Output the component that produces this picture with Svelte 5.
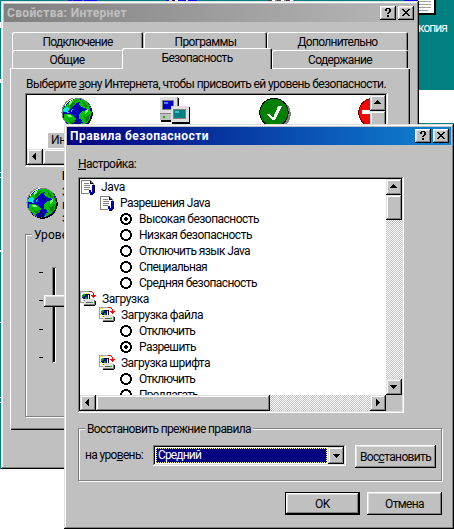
<script>
  // Spreads the glyphs so that a label takes the given number of pixels.
  function fit(node, width) {
    const natural = node.getBoundingClientRect().width;
    const count = [...node.textContent].length;
    node.style.letterSpacing = `${(width - natural) / count}px`;
  }

  const rules = [
    { kind: 'java', level: 0, text: 'Java', w: 24 },
    { kind: 'java', level: 1, text: 'Разрешения Java', w: 90 },
    { kind: 'radio', on: true, text: 'Высокая безопасность', w: 120 },
    { kind: 'radio', text: 'Низкая безопасность', w: 113 },
    { kind: 'radio', text: 'Отключить язык Java', w: 111 },
    { kind: 'radio', text: 'Специальная', w: 68 },
    { kind: 'radio', text: 'Средняя безопасность', w: 118 },
    { kind: 'load', level: 0, text: 'Загрузка', w: 47 },
    { kind: 'load', level: 1, text: 'Загрузка файла', w: 82 },
    { kind: 'radio', text: 'Отключить', w: 56 },
    { kind: 'radio', on: true, text: 'Разрешить', w: 57 },
    { kind: 'load', level: 1, text: 'Загрузка шрифта', w: 89 },
    { kind: 'radio', text: 'Отключить', w: 56 },
    { kind: 'radio', text: 'Предлагать', w: 59 }
  ];
</script>

{#snippet globe()}
  <svg class="px" width="32" height="32" viewBox="0 0 32 32">
    <circle cx="16.5" cy="16.5" r="15.2" fill="#000" />
    <circle cx="15.5" cy="15.5" r="15" fill="#808080" />
    <circle cx="16" cy="16" r="14.3" fill="#0000c8" />
    <path fill="#00c000" d="M6 7l3-3 5-2h5v3l-4 1-2 3-2 1-3 4-3 1H2l1-4z M20 2l5 2 3 4 1 5h-3l-2-2-4-1-2-3z M3 17h6l4 2 2 3-1 3-3 1-1 3-4-3-3-4z M18 18l3-4 5-1 3-2 1 6-1 5-4 5-3-1-1-3-3-1z M20 26h4l-2 3-4 1z" />
    <path fill="#008000" d="M9 9l3-4 4-2 -4 6 -4 4z M6 21l4 3 4-1 -2 3 -2 1z M21 19l5 1 3-4 -1 6 -3 3 -1 -3z M21 4l4 3 2 4-4-2z" />
    <path fill="#80ff80" d="M8 5l4-2 -1 2 -3 3z M24 14l3-2 0 3 -3 2z M5 18l4 0 2 2 -4 0z" />
    <path fill="#00e8e8" d="M2 12l4-2 2 2 -2 2 2 2 -5-1z M9 14l3-2 -1 3z" />
    <path fill="none" stroke="#fff" d="M3.5 9.5Q7 3 14 1.5" />
    <path fill="#000080" d="M14 24l4 1 1 3-4 2-3-1z M17 10l3 2-2 2-2-1z" />
  </svg>
{/snippet}

{#snippet network()}
  <svg class="px" width="32" height="32" viewBox="0 0 32 32">
    <path fill="#000" d="M1 1h18v17h-1v7H1z" />
    <path fill="#808080" d="M0 0h18v18H0z" />
    <path fill="#dfdfdf" d="M0 0h17v16H0z" /><path fill="#808080" d="M2 3h12v10H2z" />
    <path fill="#0000c8" d="M3 4h10v8H3z" /><path fill="#4080ff" d="M4 5h4v2H4z" />
    <path fill="#c0c0c0" d="M0 17h15v6H0z" /><path fill="#00c000" d="M3 19h2v2H3z" />
    <path fill="#000" d="M12 10h18v17H12z M12 28h20v4H12z" />
    <path fill="#dfdfdf" d="M11 9h18v16H11z" /><path fill="#808080" d="M13 12h13v10H13z" />
    <path fill="#008080" d="M14 13h11v8H14z" /><path fill="#40c0c0" d="M15 14h4v2h-4z" />
    <path fill="#c0c0c0" d="M11 27h19v5H11z" />
  </svg>
{/snippet}

{#snippet trusted()}
  <svg class="px" width="32" height="32" viewBox="0 0 32 32">
    <circle cx="17" cy="17" r="14.7" fill="#808080" /><circle cx="15" cy="15.5" r="14.7" fill="#000" />
    <circle cx="15" cy="15.5" r="13.7" fill="#008000" />
    <path d="M8 17h3l3 4 5-12h4l-7 14h-3z" fill="#fff" />
  </svg>
{/snippet}

{#snippet restricted()}
  <svg class="px" width="32" height="32" viewBox="0 0 32 32">
    <circle cx="15" cy="15.5" r="14.7" fill="#800000" /><circle cx="15" cy="15.5" r="13.7" fill="#f00" />
    <path d="M4 13h22v4H4z" fill="#fff" />
  </svg>
{/snippet}

{#snippet arrow(dir)}
  <svg class="px" width="7" height="7" viewBox="0 0 7 7">
    {#if dir === 'up'}<path d="M3 1h1v1h1v1h1v1h1v1H0V4h1V3h1V2h1z" />
    {:else if dir === 'down'}<path d="M0 2h7v1H6v1H5v1H4v1H3V5H2V4H1V3H0z" />
    {:else if dir === 'left'}<path d="M5 0v7H4V6H3V5H2V4H1V3h1V2h1V1h1V0z" />
    {:else}<path d="M2 0v7h1V6h1V5h1V4h1V3H5V2H4V1H3V0z" />{/if}
  </svg>
{/snippet}

{#snippet caption()}
  <span class="btn3d cap">
    <svg class="px" width="12" height="10" viewBox="0 0 12 10"><path d="M3 1h1V0h4v1h1v3H8v1H7v1H5V5h1V4h1V1H5v2H3z M5 7h2v2H5z" /></svg>
  </span>
  <span class="btn3d cap">
    <svg class="px" width="12" height="10" viewBox="0 0 12 10"><path d="M2 1h2v1h1v1h2V2h1V1h2v1H9v1H8v1H7v1h1v1h1v1h1v1H8V7H7V6H5v1H4v1H2V7h1V6h1V5h1V4H4V3H3V2H2z" /></svg>
  </span>
{/snippet}

{#snippet javaIcon()}
  <svg class="px" width="16" height="16" viewBox="0 0 16 16">
    <path fill="#fff" d="M1 1h9l2 3v9H1z" />
    <path fill="#808080" d="M0 1h9v1H1v12H0z M0 14h8v1H0z M3 4h5v1H3z M3 6h6v1H3z M3 8h6v1H3z M3 10h5v1H3z M9 1h1v1h1v1h1v1h1v2h-1V5H9z" />
    <path fill="#000" d="M9 2h1v2h2v1H9z M13 6h1v8h-1v1h-1v1H9v-1h3z" />
    <path fill="#0000c0" d="M11 6h2v8h-1v1H9v-1H8v-3h2v2h1z" />
  </svg>
{/snippet}

{#snippet loadIcon()}
  <svg class="px" width="16" height="16" viewBox="0 0 16 16">
    <path fill="#a0a0a0" d="M0 0h9v12H0z" /><path fill="#fff" d="M1 1h8v10H1z" />
    <path fill="#e8e800" d="M1 1h1v1H1z M3 1h1v1H3z M1 7h1v1H1z M3 9h1v1H3z M2 5h1v1H2z M6 2h1v1H6z" />
    <path fill="#0000a0" d="M3 3h4v1h1v4H3V7H2V4h1z" /><path fill="#00a000" d="M3 3h2v2H4v1H2V4h1z M5 6h2v2H5z" />
    <path fill="#000" d="M7 3h3v5H9V4H7z" />
    <path fill="#f00" d="M9 0h3v1h1v1h1v2h2v1h-1v1h-1v1h-1V6h-1V5h-1V4h2V2h-1V1H9z" />
    <path fill="#000" d="M5 10h11v4h-1v1H4v-1z" />
    <path fill="#808080" d="M4 9h11v5H4z" /><path fill="#dfdfdf" d="M5 8h9v2H5z M4 10h10v3H4z" />
    <path fill="#606060" d="M6 11h5v1H6z" /><path fill="#00c000" d="M11 11h2v1h-2z" />
  </svg>
{/snippet}

{#snippet radio(on)}
  <svg class="px" width="12" height="12" viewBox="0 0 12 12">
    <path d="M4 0h4v1h2v1h1v2h1v4h-1v2h-1v1H8v1H4v-1H2v-1H1V8H0V4h1V2h1V1h2z" />
    <path fill="#fff" d="M4 2h4v1h1v1h1v4H9v1H8v1H4V9H3V8H2V4h1V3h1z" />
    {#if on}<path d="M5 4h2v1h1v2H7v1H5V7H4V5h1z" />{/if}
  </svg>
{/snippet}

<div class="desktop">
  <div class="edge"></div>
  <div class="paper"></div>
  <div class="doc">
    <svg class="px" width="18" height="15" viewBox="0 0 18 15"><path fill="#000" d="M0 0h18v15H0z" /><path fill="#fff" d="M0 0h16v13H0z" /><path fill="#a0a0a0" d="M0 1h13v1H0z M0 4h13v1H0z M0 7h13v1H0z M0 10h10v1H0z" /></svg>
    <span class="doc-name"><span class="t" use:fit={29}>копия</span></span>
  </div>

  <section class="window props">
    <header class="title inactive">
      <b class="t" use:fit={120}>Свойства: Интернет</b><span class="grow"></span>{@render caption()}
    </header>
    <div class="sheet">
      <div class="tabs">
        <div class="tab a"><span class="t" use:fit={70}>Подключение</span></div>
        <div class="tab b"><span class="t" use:fit={62}>Программы</span></div>
        <div class="tab c"><span class="t" use:fit={80}>Дополнительно</span></div>
      </div>
      <div class="tabs front">
        <div class="tab d"><span class="t" use:fit={35}>Общие</span></div>
        <div class="tab sel"><span class="t" use:fit={71}>Безопасность</span></div>
        <div class="tab e"><span class="t" use:fit={64}>Содержание</span></div>
      </div>
      <div class="panel">
        <div class="line"><span class="t" use:fit={360}>Выберите <u>з</u>ону Интернета, чтобы присвоить ей уровень безопасности.</span></div>
        <div class="sunken zones">
          <div class="zone-row">
            <div class="zone-items">
              <div class="zone">{@render globe()}<span class="zone-name"><span class="t" use:fit={51}>Интернет</span></span></div>
              <div class="zone">{@render network()}</div>
              <div class="zone">{@render trusted()}</div>
              <div class="zone">{@render restricted()}</div>
            </div>
            <div class="vbar"><span class="btn3d sb">{@render arrow('up')}</span><span class="btn3d thumb"></span></div>
          </div>
          <div class="hbar"><span class="btn3d sb">{@render arrow('left')}</span><span class="btn3d thumb"></span></div>
        </div>
        <div class="zone-info">
          {@render globe()}
          <div class="info-text"><b>Интернет</b><span>Зона</span><span>которая</span><span>зоны</span></div>
        </div>
        <div class="group level">
          <span class="legend"><span class="t" use:fit={48}>Уровень</span></span>
          <div class="slider">
            <div class="ticks"><i></i><i></i><i></i><i></i></div>
            <div class="track"><span class="btn3d knob"></span></div>
          </div>
        </div>
      </div>
    </div>
  </section>

  <section class="window dialog">
    <header class="title">
      <b class="t" use:fit={139}>Правила безопасности</b><span class="grow"></span>{@render caption()}
    </header>
    <div class="body">
      <div class="line"><span class="t" use:fit={58}><u>Н</u>астройка:</span></div>
      <div class="sunken list">
        <div class="list-row">
          <div class="rules">
            {#each rules as r}
              <div class="rule {r.kind}" class:nested={r.level === 1}>
                {#if r.kind === 'radio'}{@render radio(r.on)}
                {:else if r.kind === 'java'}{@render javaIcon()}
                {:else}{@render loadIcon()}{/if}
                <span class="t" use:fit={r.w}>{r.text}</span>
              </div>
            {/each}
          </div>
          <div class="vbar">
            <span class="btn3d sb">{@render arrow('up')}</span><span class="btn3d thumb"></span>
            <span class="grow"></span><span class="btn3d sb">{@render arrow('down')}</span>
          </div>
        </div>
        <div class="hbar">
          <span class="btn3d sb">{@render arrow('left')}</span><span class="btn3d thumb"></span>
          <span class="grow"></span><span class="btn3d sb">{@render arrow('right')}</span><span class="corner"></span>
        </div>
      </div>
      <div class="group reset">
        <span class="legend"><span class="t" use:fit={164}>Восстановить прежние правила</span></span>
        <div class="reset-row">
          <span class="reset-label"><span class="t" use:fit={58}>на уро<u>в</u>ень:</span></span>
          <div class="sunken combo">
            <span class="value"><span class="t" use:fit={43}>Средний</span></span>
            <span class="btn3d drop">{@render arrow('down')}</span>
          </div>
          <button class="btn3d restore"><span class="t" use:fit={71}>Вос<u>с</u>тановить</span></button>
        </div>
      </div>
      <div class="actions">
        <button class="btn3d ok"><span class="t" use:fit={15}>OK</span></button>
        <button class="btn3d"><span class="t" use:fit={39}>Отмена</span></button>
      </div>
    </div>
  </section>
</div>

<style>
  .desktop {
    position: relative; width: 454px; height: 529px; overflow: hidden; background: #fff;
    font: 12px/14px Roboto, "Liberation Sans", Arial, sans-serif; color: #000;
  }
  .desktop * { box-sizing: border-box; }
  .px { display: block; shape-rendering: crispEdges; flex: none; }
  .t { display: inline-block; white-space: pre; flex: none; }
  u { text-decoration: underline; text-underline-offset: 1px; text-decoration-thickness: 1px; text-decoration-skip-ink: none; }
  .grow { flex: 1; }

  .edge {
    position: absolute; left: 0; top: 0; width: 454px; height: 469px;
    background:
      linear-gradient(90deg, #00f 0 4px, #008080 0 5px, #00f 0 14px, #008080 0 16px, #00f 0) 68px 0 / 29px 1px no-repeat,
      linear-gradient(90deg, #00f 0 3px, #e8e0a0 0 6px, #000080 0 9px, #fff 0 12px, #00f 0 20px, #e8e0a0 0 22px, #00f 0) 166px 0 / 31px 1px no-repeat,
      repeating-linear-gradient(90deg, #404040 0 4px, #fff 0 7px, #808080 0 9px) 268px 0 / 26px 1px no-repeat,
      linear-gradient(#00f, #00f) 404px 0 / 15px 1px no-repeat,
      linear-gradient(#fff, #fff) 0 22px / 1px 6px no-repeat,
      linear-gradient(#fff, #fff) 0 79px / 1px 4px no-repeat,
      linear-gradient(#fff, #fff) 0 172px / 1px 1px no-repeat,
      linear-gradient(#fff, #fff) 0 177px / 1px 1px no-repeat,
      linear-gradient(#fff, #fff) 0 250px / 1px 2px no-repeat,
      linear-gradient(#fff, #fff) 0 322px / 1px 1px no-repeat,
      linear-gradient(#fff, #fff) 0 397px / 1px 1px no-repeat,
      linear-gradient(#fff, #fff) 0 402px / 1px 1px no-repeat,
      #008080;
  }
  .paper { position: absolute; left: 419px; top: 90px; width: 35px; height: 33px; background: #fff; }
  .doc { position: absolute; left: 418px; top: 0; color: #fff; }
  .doc-name { display: block; margin-top: 6px; }

  .window {
    position: absolute; padding: 3px; background: #c0c0c0;
    box-shadow: inset -1px -1px #000, inset 1px 1px #dfdfdf, inset -2px -2px #808080, inset 2px 2px #fff;
  }
  .props { left: 1px; top: 1px; width: 418px; height: 468px; }
  .dialog { left: 64px; top: 124px; width: 390px; height: 405px; }
  .title {
    display: flex; align-items: center; height: 18px; padding: 0 2px 0 3px;
    color: #fff; line-height: 18px; background: linear-gradient(90deg, #000080, #1084d0);
  }
  .title.inactive { color: #c0c0c0; background: linear-gradient(90deg, #808080, #b8b8b8); }
  .btn3d {
    display: flex; align-items: center; justify-content: center; flex: none; padding: 0; border: 0;
    background: #c0c0c0; font: inherit; color: #000;
    box-shadow: inset -1px -1px #000, inset 1px 1px #fff, inset -2px -2px #808080, inset 2px 2px #dfdfdf;
  }
  .cap { width: 16px; height: 14px; padding: 0 1px 1px 0; }
  .cap + :global(.cap) { margin-left: 2px; }
  .sb { width: 16px; height: 16px; padding: 0 1px 1px 0; box-shadow: inset -1px -1px #000, inset 1px 1px #dfdfdf, inset -2px -2px #808080, inset 2px 2px #fff; }
  .thumb { box-shadow: inset -1px -1px #000, inset 1px 1px #dfdfdf, inset -2px -2px #808080, inset 2px 2px #fff; }
  .sunken {
    padding: 2px; background: #fff;
    box-shadow: inset -1px -1px #fff, inset 1px 1px #808080, inset -2px -2px #dfdfdf, inset 2px 2px #000;
  }
  .vbar, .hbar { display: flex; flex: none; background: conic-gradient(#fff 25%, #c0c0c0 0 50%, #fff 0 75%, #c0c0c0 0) 0 0 / 2px 2px; }
  .vbar { flex-direction: column; width: 16px; }
  .hbar { height: 16px; }
  .line { height: 14px; }
  .group { border: 1px solid #808080; box-shadow: 1px 1px #fff, inset 1px 1px #fff; }
  .legend { display: block; width: fit-content; height: 14px; margin: -7px 0 0 6px; padding: 0 2px; background: #c0c0c0; }

  .sheet { padding: 10px 5px 0 6px; }
  .tabs { display: flex; height: 18px; padding-left: 2px; }
  .tab {
    display: flex; justify-content: center; height: 18px; padding-top: 3px; border-radius: 2px 2px 0 0;
    background: #c0c0c0; box-shadow: inset 1px 1px #fff, inset -1px 0 #000, inset -2px 0 #808080;
  }
  .a { width: 131px; }
  .b { width: 123px; margin-left: 1px; }
  .c { width: 141px; }
  .d { width: 110px; box-shadow: inset 1px 1px #fff; }
  .e { width: 136px; }
  .sel { width: 150px; height: 21px; margin-top: -2px; z-index: 1; }
  .front .sel { position: relative; }
  .panel {
    height: 362px; padding: 9px 0 0 15px; width: 400px;
    box-shadow: inset 1px 1px #fff, inset -1px -1px #000, inset -2px -2px #808080;
  }
  .panel .line { padding-left: 1px; }
  .zones { width: 363px; height: 74px; margin-top: 2px; }
  .zone-row { display: flex; height: 54px; }
  .zone-items { display: flex; flex: 1; min-width: 0; overflow: hidden; padding-top: 2px; }
  .zone { display: flex; flex-direction: column; align-items: center; flex: none; width: 99px; }
  .zone-name { height: 15px; margin-top: 4px; padding: 0 3px; background: #c0c0c0; }
  .zone-row .thumb { width: 16px; height: 30px; }
  .zones .thumb { flex: 1; }
  .zone-info { display: flex; height: 67px; padding: 20px 0 0 1px; }
  .info-text { display: flex; flex-direction: column; height: 67px; margin: -16px 0 0 4px; line-height: 13px; }
  .info-text b { margin: -1px 0 3px; }
  .level { width: 359px; height: 183px; }
  .slider { display: flex; padding: 25px 0 0 13px; }
  .ticks { display: flex; flex-direction: column; justify-content: space-between; height: 86px; margin-top: 5px; }
  .ticks i { width: 4px; height: 1px; background: #000; }
  .track { width: 4px; height: 96px; margin-left: 9px; background: #000; box-shadow: inset 1px 1px #808080, inset -1px -1px #fff; }
  .knob { width: 28px; height: 12px; margin: 28px 0 0 -8px; }

  .body { padding: 12px 8px 0 11px; }
  .list { width: 326px; height: 236px; margin-top: 6px; }
  .list-row { display: flex; height: 216px; }
  .rules { flex: 1; height: 216px; overflow: hidden; }
  .rule { display: flex; align-items: center; height: 16px; line-height: 16px; }
  .rule.java { padding-left: 1px; gap: 4px; }
  .rule.java.nested { padding-left: 20px; }
  .rule.load { padding-left: 0; gap: 6px; }
  .rule.load.nested { padding-left: 19px; }
  .rule.radio { padding-left: 40px; gap: 7px; }
  .list .vbar .thumb { height: 25px; }
  .list .hbar .thumb { width: 174px; }
  .corner { width: 16px; background: #c0c0c0; }
  .reset { width: 364px; height: 53px; margin-top: 15px; }
  .reset-row { display: flex; margin-top: 9px; padding-left: 6px; }
  .reset-label { width: 68px; padding-top: 3px; }
  .combo { display: flex; width: 193px; height: 21px; }
  .value {
    flex: 1; margin: 1px 1px 1px 1px; padding: 0 0 0 2px; height: 15px; background: #000080; color: #fff;
    outline: 1px dotted #ff8; outline-offset: -1px; line-height: 15px;
  }
  .drop { width: 16px; height: 17px; box-shadow: inset -1px -1px #000, inset 1px 1px #dfdfdf, inset -2px -2px #808080, inset 2px 2px #fff; }
  .restore { width: 81px; height: 23px; margin-left: 9px; }
  .actions { display: flex; justify-content: flex-end; gap: 7px; margin-top: 11px; padding-right: 1px; }
  .actions button { width: 75px; height: 23px; }
  .actions .ok { border: 1px solid #000; }
</style>
